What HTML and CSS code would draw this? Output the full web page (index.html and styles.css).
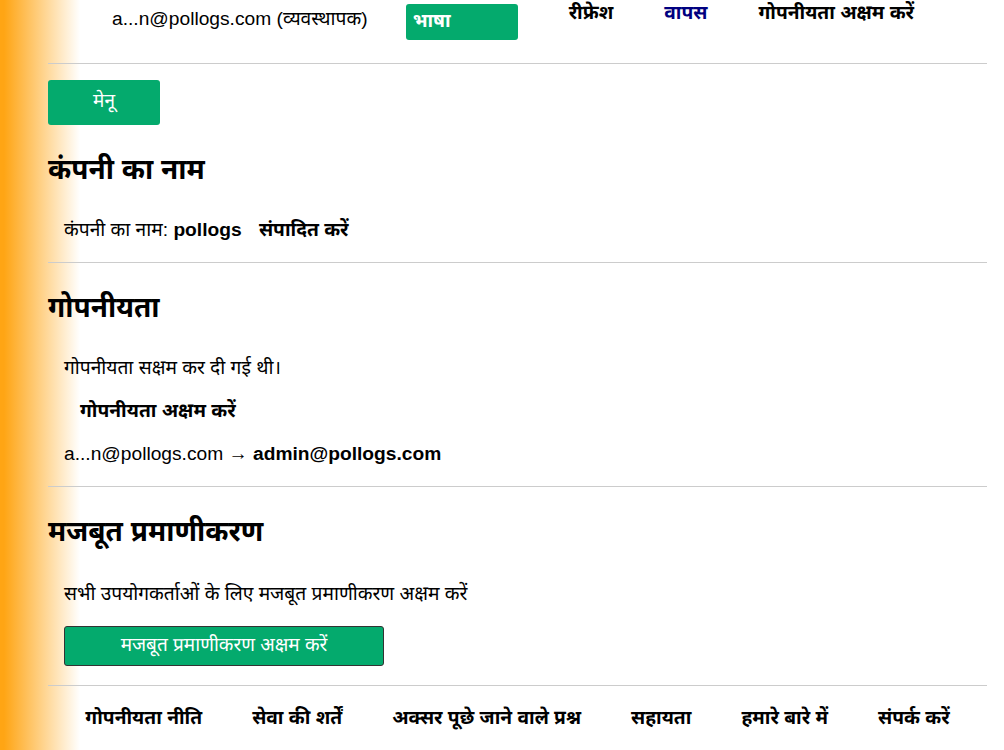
FILE: index.html
```html
<!DOCTYPE html>
<html lang="hi">
<head>
  <meta charset="UTF-8">
  <meta name="viewport" content="width=device-width, initial-scale=1.0">
  <title>सेटिंग्स</title>
  <link rel="stylesheet" href="styles.css">
</head>
<body>
<div class="page">
  <header class="topbar">
    <span class="user">a...n@pollogs.com (व्यवस्थापक)</span>
    <button class="lang-btn">भाषा</button>
    <nav class="top-links">
      <a href="#">रीफ्रेश</a>
      <a href="#" class="back">वापस</a>
      <a href="#">गोपनीयता अक्षम करें</a>
    </nav>
  </header>

  <main>
    <button class="menu-btn">मेनू</button>

    <section class="block">
      <h2>कंपनी का नाम</h2>
      <p class="line">कंपनी का नाम: <b>pollogs</b> <a href="#" class="edit">संपादित करें</a></p>
    </section>

    <section class="block">
      <h2>गोपनीयता</h2>
      <p class="line">गोपनीयता सक्षम कर दी गई थी।</p>
      <p class="line sub"><a href="#">गोपनीयता अक्षम करें</a></p>
      <p class="line">a...n@pollogs.com → <b>admin@pollogs.com</b></p>
    </section>

    <section class="block">
      <h2>मजबूत प्रमाणीकरण</h2>
      <p class="line intro">सभी उपयोगकर्ताओं के लिए मजबूत प्रमाणीकरण अक्षम करें</p>
      <button class="wide-btn">मजबूत प्रमाणीकरण अक्षम करें</button>
    </section>
  </main>

  <footer class="footer">
    <a href="#">गोपनीयता नीति</a>
    <a href="#">सेवा की शर्तें</a>
    <a href="#">अक्सर पूछे जाने वाले प्रश्न</a>
    <a href="#">सहायता</a>
    <a href="#">हमारे बारे में</a>
    <a href="#">संपर्क करें</a>
  </footer>
</div>
</body>
</html>
```

FILE: styles.css
```css
* {
  margin: 0;
  padding: 0;
  box-sizing: border-box;
}

body {
  font-family: "Liberation Sans", Arial, "Noto Sans", "Noto Sans Devanagari", sans-serif;
  font-size: 19.2px;
  color: #000;
  background: linear-gradient(90deg, #ffa514 4px, #fff 80px);
  min-height: 100vh;
}

a {
  color: #000;
  text-decoration: none;
  font-weight: bold;
}

.page {
  padding: 0 17px 0 48px;
}

/* top bar */
.topbar {
  display: flex;
  align-items: flex-start;
  height: 64px;
  padding: 4px 0 0 64px;
  border-bottom: 1px solid #ccc;
}

.user {
  margin-top: 1px;
  line-height: 28px;
}

.lang-btn {
  margin-left: 38px;
  width: 112px;
  height: 36px;
  background: #04aa6d;
  color: #fff;
  border: none;
  border-radius: 3px;
  font: bold 19px "Liberation Sans", "Noto Sans Devanagari", sans-serif;
  text-align: left;
  padding: 0 7px;
}

.top-links {
  display: flex;
  gap: 51px;
  margin-left: 51px;
  line-height: 18px;
}

.top-links a.back {
  color: #000080;
}

/* main */
main {
  padding-top: 16px;
}

.menu-btn {
  width: 112px;
  height: 45px;
  background: #04aa6d;
  color: #fff;
  border: none;
  border-radius: 3px;
  font: 19px "Liberation Sans", "Noto Sans Devanagari", sans-serif;
}

.block {
  display: flex;
  flex-direction: column;
  align-items: flex-start;
  gap: 13px;
  border-bottom: 1px solid #ccc;
  padding-bottom: 17px;
}

.block h2 {
  font-size: 28px;
  line-height: 40px;
  margin: 25px 0 12px;
}

.line {
  padding-left: 16px;
  line-height: 30px;
}

.line.sub {
  padding-left: 32px;
}

.line.intro {
  margin-top: 2px;
}

.edit {
  margin-left: 12px;
}

.wide-btn {
  margin: 4px 0 2px 16px;
  width: 320px;
  height: 40px;
  background: #04aa6d;
  color: #fff;
  border: 1px solid #333;
  border-radius: 3px;
  font: 19px "Liberation Sans", "Noto Sans Devanagari", sans-serif;
}

/* footer */
.footer {
  display: flex;
  justify-content: center;
  gap: 50px;
  padding-top: 17px;
  line-height: 30px;
}
```
